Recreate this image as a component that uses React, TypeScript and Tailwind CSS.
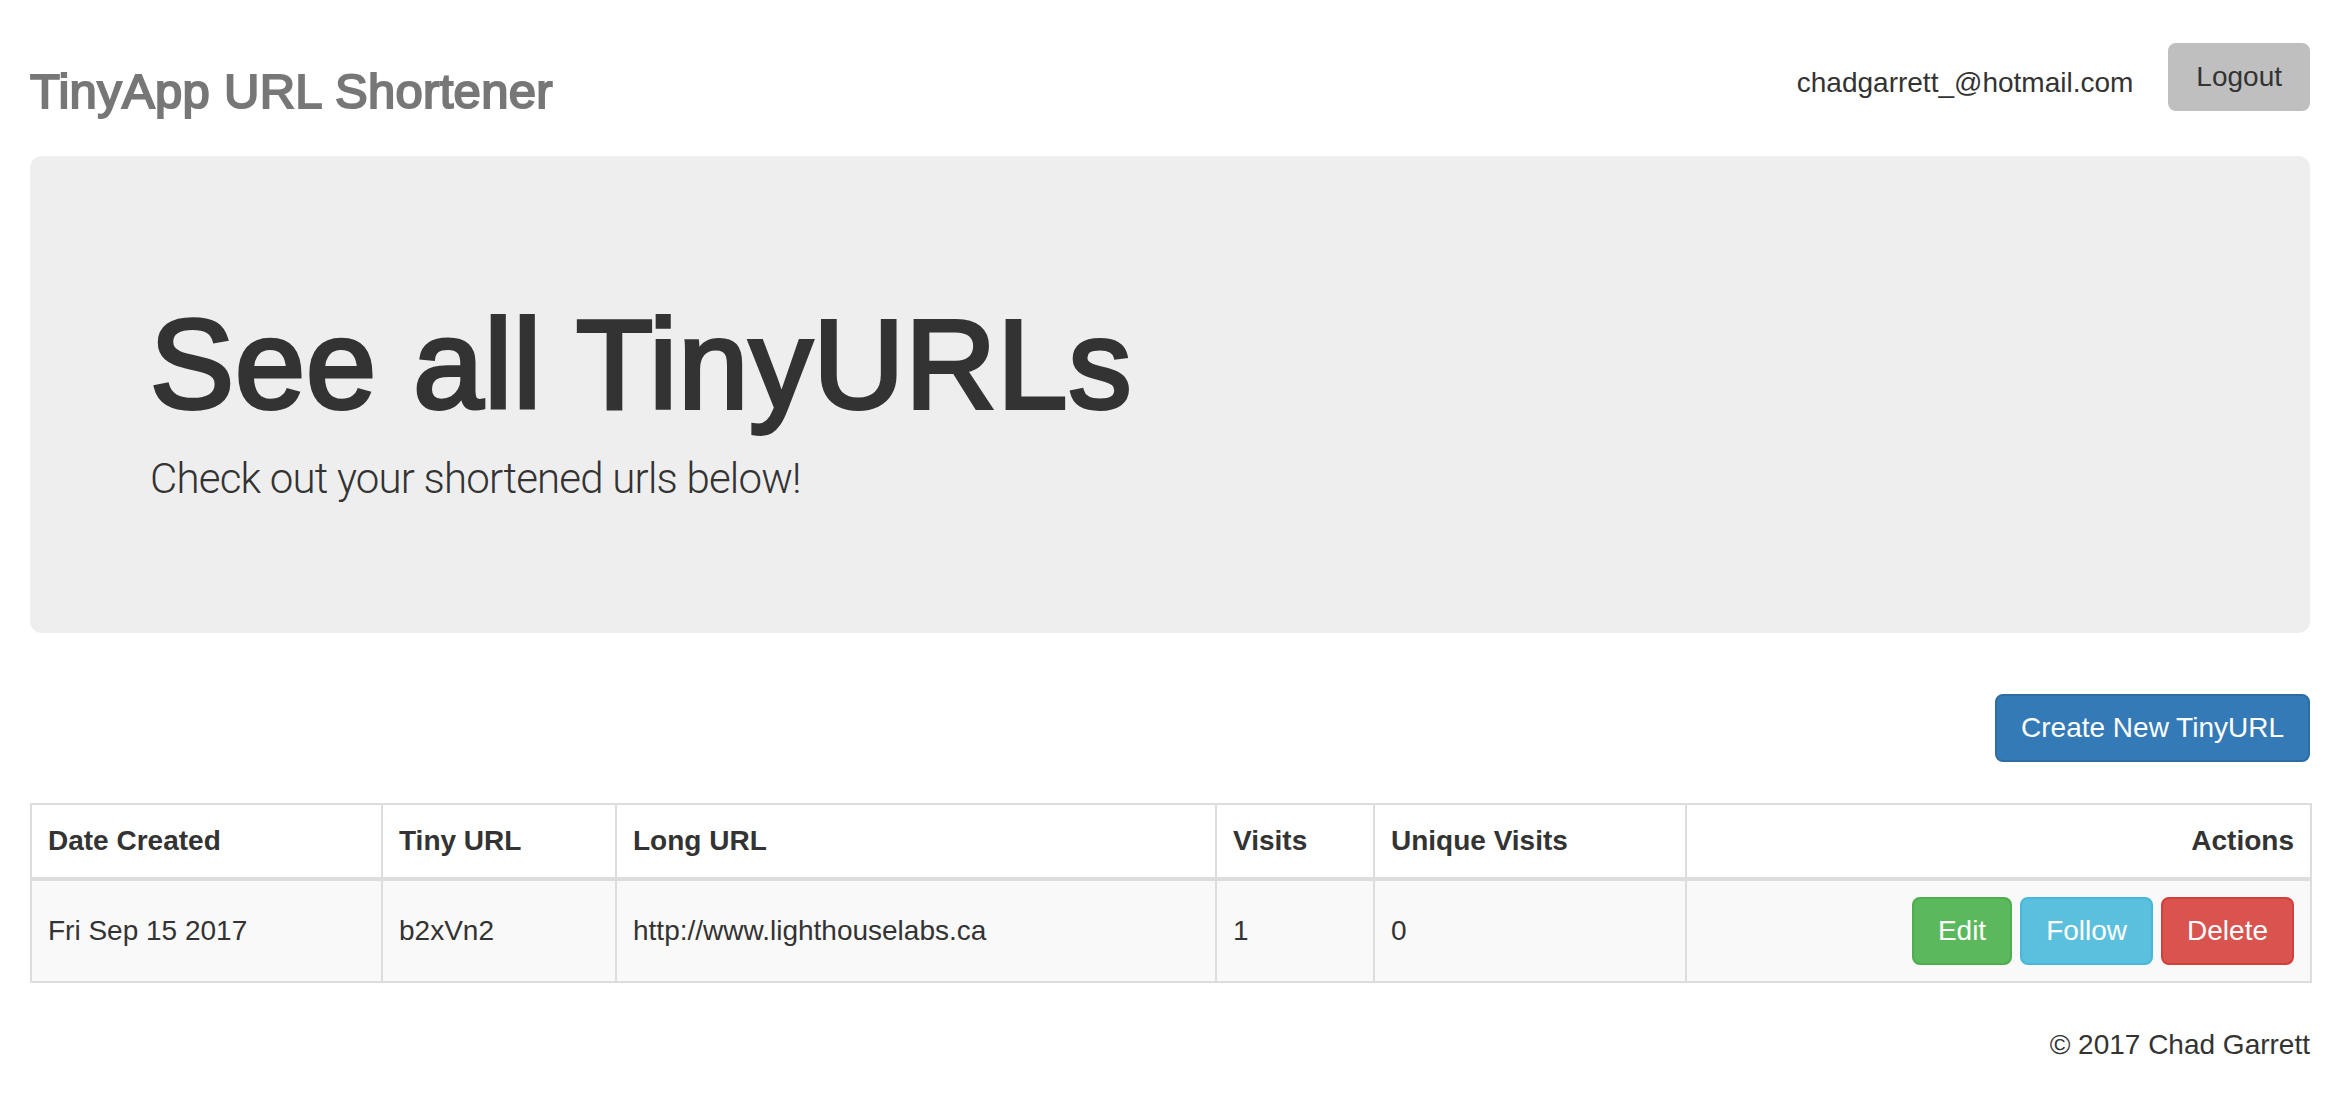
import React from 'react';

const COLS = [351, 234, 600, 158, 312, 625];

const HEADERS = ['Date Created', 'Tiny URL', 'Long URL', 'Visits', 'Unique Visits'];

const URLS = [
  { date: 'Fri Sep 15 2017', tiny: 'b2xVn2', long: 'http://www.lighthouselabs.ca', visits: 1, unique: 0 },
];

export default function App() {
  return (
    <div className="min-h-screen bg-white px-[30px] text-[28px] leading-[40px] text-[#333] font-['Liberation_Sans',Arial,sans-serif]">
      {/* Navbar */}
      <header className="flex h-[156px] items-start justify-between">
        <a href="#" className="mt-[64px] text-[49px] leading-[54px] tracking-[0.3px] text-[#777] [-webkit-text-stroke:2px_#777]">
          TinyApp URL Shortener
        </a>
        <div className="flex items-start">
          <span className="mt-[63px] text-[#333]">chadgarrett_@hotmail.com</span>
          <button className="ml-[35px] mt-[43px] rounded-[8px] border-2 border-[#bfbfbf] bg-[#bfbfbf] px-[26px] py-[12px] text-[#333]">
            Logout
          </button>
        </div>
      </header>

      {/* Jumbotron */}
      <section className="rounded-[12px] bg-[#eeeeee] pl-[120px] pt-[139px] pb-[125px]">
        <h1 className="text-[126px] leading-[139px] tracking-[1px] text-[#333] [-webkit-text-stroke:4px_#333]">See all TinyURLs</h1>
        <p className="mt-[15px] text-[42px] leading-[59px] font-light tracking-[-0.8px] text-[#333] font-['Roboto',sans-serif]">
          Check out your shortened urls below!
        </p>
      </section>

      {/* Create */}
      <div className="mt-[61px] flex justify-end">
        <button className="rounded-[8px] border-2 border-[#2e6da4] bg-[#337ab7] px-[24px] py-[12px] text-white">
          Create New TinyURL
        </button>
      </div>

      {/* Table */}
      <table className="mt-[41px] w-full table-fixed border-collapse border-2 border-[#dddddd]">
        <colgroup>
          {COLS.map((w, i) => (
            <col key={i} style={{ width: w }} />
          ))}
        </colgroup>
        <thead>
          <tr>
            {HEADERS.map((h) => (
              <th key={h} className="border-2 border-b-4 border-[#dddddd] p-[16px] text-left font-bold">
                {h}
              </th>
            ))}
            <th className="border-2 border-b-4 border-[#dddddd] p-[16px] text-right font-bold">Actions</th>
          </tr>
        </thead>
        <tbody>
          {URLS.map((u) => (
            <tr key={u.tiny} className="bg-[#f9f9f9]">
              <td className="border-2 border-[#dddddd] p-[16px]">{u.date}</td>
              <td className="border-2 border-[#dddddd] p-[16px]">{u.tiny}</td>
              <td className="border-2 border-[#dddddd] p-[16px]">{u.long}</td>
              <td className="border-2 border-[#dddddd] p-[16px]">{u.visits}</td>
              <td className="border-2 border-[#dddddd] p-[16px]">{u.unique}</td>
              <td className="border-2 border-[#dddddd] p-[16px] text-right">
                <div className="flex justify-end gap-[8px]">
                  <button className="rounded-[8px] border-2 border-[#4cae4c] bg-[#5cb85c] px-[24px] py-[12px] text-white">
                    Edit
                  </button>
                  <button className="rounded-[8px] border-2 border-[#46b8da] bg-[#5bc0de] px-[24px] py-[12px] text-white">
                    Follow
                  </button>
                  <button className="rounded-[8px] border-2 border-[#d43f3a] bg-[#d9534f] px-[24px] py-[12px] text-white">
                    Delete
                  </button>
                </div>
              </td>
            </tr>
          ))}
        </tbody>
      </table>

      {/* Footer */}
      <footer className="mt-[42px] text-right">© 2017 Chad Garrett</footer>
    </div>
  );
}
